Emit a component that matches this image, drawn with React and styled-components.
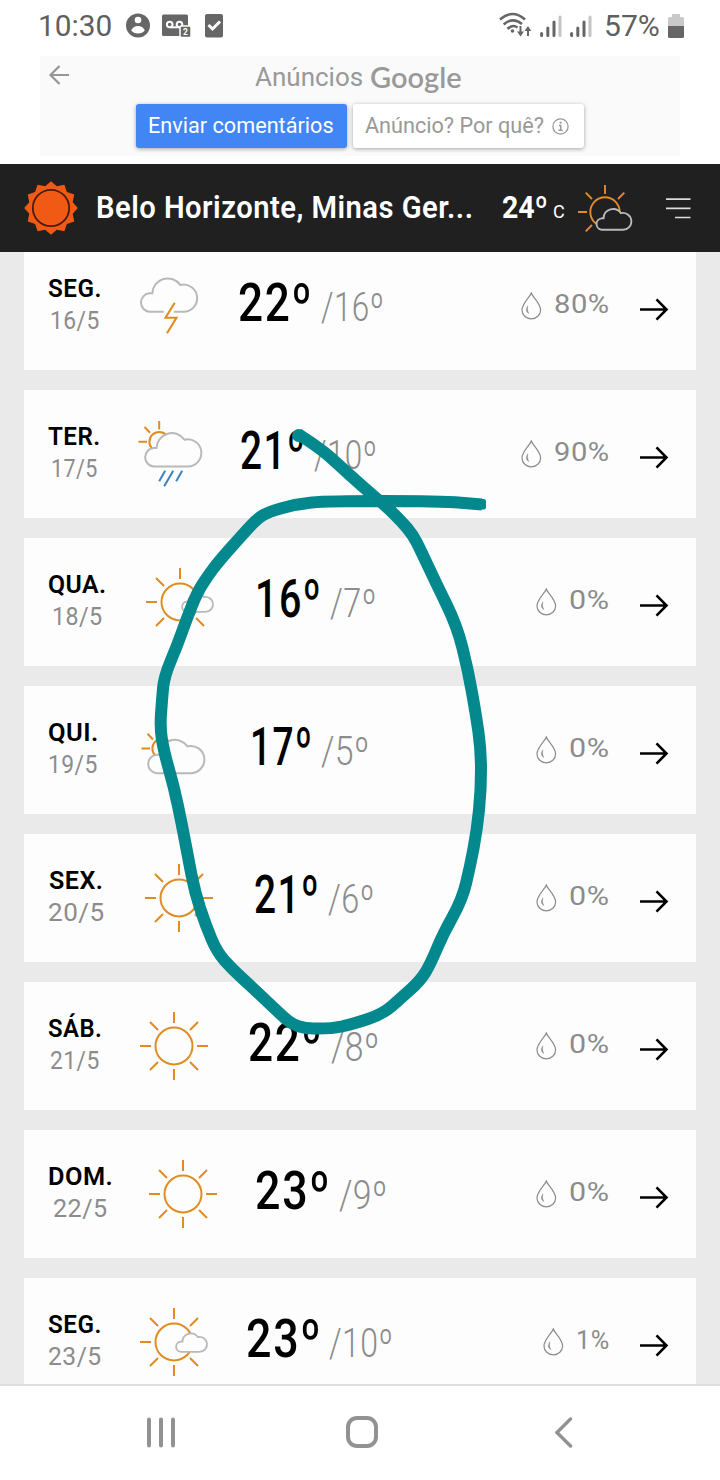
import React, { useLayoutEffect, useRef, useState } from "react";
import styled, { createGlobalStyle } from "styled-components";

const ORANGE = "#e18c22";
const GREY = "#b9b9b9";

const DAYS = [
  { day: "SEG.", dayW: 54, date: "16/5", dateW: 50, box: 53, icon: "storm", iconGap: 38, high: "22º", highW: 75, tempGap: 31, low: "/16º", lowW: 63, lowGap: 8, rain: "80%", rainW: 56 },
  { day: "TER.", dayW: 53, date: "17/5", dateW: 47, box: 53, icon: "rain", iconGap: 37, high: "21º", highW: 66, tempGap: 34, low: "/10º", lowW: 63, lowGap: 8, rain: "90%", rainW: 56 },
  { day: "QUA.", dayW: 59, date: "18/5", dateW: 51, box: 58, icon: "sunCloud", iconGap: 40, high: "16º", highW: 67, tempGap: 41, low: "/7º", lowW: 47, lowGap: 8, rain: "0%", rainW: 41 },
  { day: "QUI.", dayW: 51, date: "19/5", dateW: 50, box: 50, icon: "cloudy", iconGap: 43, high: "17º", highW: 63, tempGap: 41, low: "/5º", lowW: 49, lowGap: 8, rain: "0%", rainW: 41 },
  { day: "SEX.", dayW: 54, date: "20/5", dateW: 57, box: 56, icon: "sun", iconGap: 41, high: "21º", highW: 66, tempGap: 41, low: "/6º", lowW: 47, lowGap: 8, rain: "0%", rainW: 41 },
  { day: "SÁB.", dayW: 54, date: "21/5", dateW: 50, box: 53, icon: "sun", iconGap: 39, high: "22º", highW: 75, tempGap: 40, low: "/8º", lowW: 49, lowGap: 8, rain: "0%", rainW: 41 },
  { day: "DOM.", dayW: 65, date: "22/5", dateW: 55, box: 64, icon: "sun", iconGap: 37, high: "23º", highW: 76, tempGap: 38, low: "/9º", lowW: 49, lowGap: 8, rain: "0%", rainW: 41 },
  { day: "SEG.", dayW: 54, date: "23/5", dateW: 54, box: 53, icon: "sunCloud", iconGap: 39, high: "23º", highW: 76, tempGap: 38, low: "/10º", lowW: 64, lowGap: 7, rain: "1%", rainW: 34 },
];

// narrows or widens a label so that it takes exactly the given width
function Fit({ width, children }) {
  const ref = useRef(null);
  const [scale, setScale] = useState(1);
  useLayoutEffect(() => {
    setScale(width / ref.current.offsetWidth);
  }, [width, children]);
  return (
    <FitBox $width={width}>
      <FitText ref={ref} style={{ transform: `scaleX(${scale})` }}>
        {children}
      </FitText>
    </FitBox>
  );
}

const CLOUD = "H10 A9.3 9.3 0 0 1 10 15 H13 A15.4 15.4 0 0 1 41 6.7 A13.6 13.6 0 1 1 44 33.5";

function Cloud({ fill = "#fdfdfd", stroke = GREY, width = 2, ...rest }) {
  return (
    <path d={`M44 33.5 ${CLOUD} Z`} fill={fill} stroke={stroke} strokeWidth={width} {...rest} />
  );
}

function Sun({ hideRight }) {
  return (
    <g stroke={ORANGE} strokeWidth="2" fill="none">
      <circle cx="34" cy="34" r="18.5" />
      <path d="M34 0V11M34 57V68M0 34H11M10 10L18 18M58 10L50 18M10 58L18 50M58 58L50 50" />
      {!hideRight && <path d="M57 34H68" />}
    </g>
  );
}

function HalfSun({ y }) {
  return (
    <g transform={`translate(0 ${y})`}>
      <g stroke={ORANGE} strokeWidth="2" fill="none">
        <circle cx="21.2" cy="21.7" r="9.8" />
        <path d="M21.2 1V9.5M.5 21.7H9M6.5 7L12 12.8" />
      </g>
      <Cloud transform="translate(5.5 13)" />
    </g>
  );
}

function WeatherIcon({ type }) {
  return (
    <IconSvg viewBox="0 0 68 68">
      {type === "sun" && <Sun />}
      {type === "sunCloud" && (
        <>
          <Sun hideRight />
          <Cloud transform="translate(35.2 25.4) scale(.55)" width={3.4} />
        </>
      )}
      {type === "cloudy" && <HalfSun y={10.7} />}
      {type === "rain" && (
        <>
          <HalfSun y={0} />
          <path d="M27.2 50.7L21.2 61.3M35.2 50.7L26.2 66.3M44.2 50.7L38.2 61.3" stroke="#3983bd" strokeWidth="2" />
        </>
      )}
      {type === "storm" && (
        <>
          <path d={`M24.5 33.5 ${CLOUD} H34.5`} fill="none" stroke={GREY} strokeWidth="2" transform="translate(.3 6.3)" />
          <path d="M35.7 30.7L26.5 45.8H37.5L28 61.3" fill="none" stroke={ORANGE} strokeWidth="2.1" />
        </>
      )}
    </IconSvg>
  );
}

function Forecast({ item, first }) {
  return (
    <Row $first={first}>
      <DayBox $width={item.box}>
        <DayName>
          <Fit width={item.dayW}>{item.day}</Fit>
        </DayName>
        <DayDate>
          <Fit width={item.dateW}>{item.date}</Fit>
        </DayDate>
      </DayBox>
      <IconBox $gap={item.iconGap}>
        <WeatherIcon type={item.icon} />
      </IconBox>
      <Temps $gap={item.tempGap}>
        <High>
          <Fit width={item.highW}>{item.high}</Fit>
        </High>
        <Low $gap={item.lowGap}>
          <Fit width={item.lowW}>{item.low}</Fit>
        </Low>
      </Temps>
      <Rain>
        <svg width="21" height="28" viewBox="0 0 21 28" fill="none" stroke="#8c8c8c" strokeWidth="1.2">
          <path d="M10.3 1C9 5 1 11.5 1 18a9.3 8.8 0 0 0 18.6 0C19.6 11.5 11.6 5 10.3 1Z" />
          <path d="M6.8 13.8C4 18.5 6 20.5 7.8 21.5C6.5 19 6.2 17 6.8 13.8Z" fill="#8c8c8c" strokeWidth=".5" />
        </svg>
        <Fit width={item.rainW}>{item.rain}</Fit>
      </Rain>
      <Arrow width="29" height="23" viewBox="0 0 29 23">
        <path d="M0 11.5H26.5M16.5 1.3L26.5 11.5L16.5 21.7" fill="none" stroke="#000" strokeWidth="2.6" />
      </Arrow>
    </Row>
  );
}

function Signal() {
  return (
    <svg width="22" height="24" viewBox="0 0 22 24" strokeWidth="3" strokeLinecap="round">
      <path d="M1.6 19.5V21.5M7.8 14V21.5M14 8V21.5" stroke="#666" />
      <path d="M20 3V21.5" stroke="#c4c4c4" />
    </svg>
  );
}

function StatusBar() {
  return (
    <Status>
      <Clock>
        <Fit width={74}>10:30</Fit>
      </Clock>
      <StatusIcons>
        <svg width="98" height="26" viewBox="0 0 98 26">
          <circle cx="12" cy="12.5" r="12" fill="#666" />
          <circle cx="12" cy="7" r="3.3" fill="#fff" />
          <path d="M5.2 17.3Q7.5 13 12 13T18.8 17.3Q16.5 20.5 12 20.5T5.2 17.3Z" fill="#fff" />
          <rect x="36" y="1.5" width="26" height="21.5" rx="1.5" fill="#666" />
          <path d="M43.5 14.3H54" stroke="#fff" strokeWidth="2" />
          <circle cx="43.7" cy="11.5" r="2.8" fill="none" stroke="#fff" strokeWidth="2" />
          <circle cx="53.5" cy="11.5" r="2.8" fill="none" stroke="#fff" strokeWidth="2" />
          <rect x="54" y="13" width="11" height="11.5" rx="1.5" fill="#666" stroke="#fff" strokeWidth="1.5" />
          <text x="57" y="22" fontSize="8.5" fontWeight="700" fill="#fff">2</text>
          <rect x="79" y="1" width="18" height="23.5" rx="2" fill="#666" />
          <path d="M82.5 12L86.5 16L94 8.5" fill="none" stroke="#fff" strokeWidth="3" />
        </svg>
      </StatusIcons>
      <StatusRight>
        <Wifi width="33" height="26" viewBox="0 0 33 26" fill="none" stroke="#666">
          <path d="M1 7.5Q13.5 -3.5 26 7.5" strokeWidth="2.5" />
          <path d="M4.7 12.5Q13.5 4.5 23 12" strokeWidth="2.5" />
          <path d="M8.5 17Q13.5 12 18.5 15.5" strokeWidth="2.5" />
          <circle cx="13.5" cy="19" r="1.8" fill="#666" stroke="none" />
          <path d="M21.5 14V22M29 24V17" strokeWidth="2" />
          <path d="M18 19.5H25L21.5 24.5ZM25.5 19H32.3L29 14Z" fill="#666" stroke="none" />
        </Wifi>
        <Signal />
        <Signal />
        <Percent>
          <Fit width={56}>57%</Fit>
        </Percent>
        <svg width="16" height="24" viewBox="0 0 16 24">
          <path d="M4 0H12V3H14.5Q16 3 16 4.5V12H0V4.5Q0 3 1.5 3H4Z" fill="#c9c9c9" />
          <path d="M0 12H16V22.5Q16 24 14.5 24H1.5Q0 24 0 22.5Z" fill="#666" />
        </svg>
      </StatusRight>
    </Status>
  );
}

function AdPanel() {
  return (
    <Ad>
      <AdTop>
        <BackArrow width="22" height="20" viewBox="0 0 22 20">
          <path d="M21 10H2.5M11.5 1L2.5 10L11.5 19" fill="none" stroke="#969696" strokeWidth="2.2" />
        </BackArrow>
        <AdTitle>
          <Fit width={108}>Anúncios</Fit>
        </AdTitle>
        <Brand>
          <Fit width={92}>Google</Fit>
        </Brand>
      </AdTop>
      <AdButtons>
        <AdButton $primary>
          <Fit width={186}>Enviar comentários</Fit>
        </AdButton>
        <AdButton>
          <Fit width={179}>Anúncio? Por quê?</Fit>
          <svg width="17" height="17" viewBox="0 0 17 17" fill="none" stroke="#999">
            <circle cx="8.5" cy="8.5" r="7.6" strokeWidth="1.3" />
            <path d="M7 7.5H8.7V12M6.5 12.3H10.7" strokeWidth="1.5" />
            <path d="M7.6 4.7H9.6" strokeWidth="1.9" />
          </svg>
        </AdButton>
      </AdButtons>
    </Ad>
  );
}

const burst = Array.from({ length: 24 }, (_, i) => {
  const r = i % 2 ? 22.5 : 26.8;
  const a = (i * Math.PI) / 12;
  return `${27 + r * Math.sin(a)},${27 - r * Math.cos(a)}`;
}).join(" ");

function Header() {
  return (
    <TopBar>
      <svg width="54" height="54" viewBox="0 0 54 54">
        <polygon points={burst} fill="#f05a14" />
        <circle cx="27" cy="27" r="18.2" fill="none" stroke="#4a1c0c" strokeWidth="1.8" />
      </svg>
      <City>
        <Fit width={377}>Belo Horizonte, Minas Ger...</Fit>
      </City>
      <Current>
        <Fit width={46}>24º</Fit>
        <Unit>
          <Fit width={12}>C</Fit>
        </Unit>
      </Current>
      <NowIcon width="55" height="48" viewBox="0 0 55 48">
        <g stroke="#e58a2c" strokeWidth="1.9" fill="none">
          <circle cx="27" cy="27" r="14.7" />
          <path d="M27 0V9M0 27H9M7.7 7.7L14 14M46.3 7.7L40 14M7.7 46.3L14 40" />
        </g>
        <Cloud transform="translate(17.5 24) scale(.62)" fill="#202020" stroke="#b9b9be" width={3} />
      </NowIcon>
      <svg width="25" height="21" viewBox="0 0 25 21" stroke="#dcdcdc" strokeWidth="1.7">
        <path d="M0 1.2H24.5M0 10.3H24.5M9 19.5H24.5" />
      </svg>
    </TopBar>
  );
}

function NavBar() {
  return (
    <Nav>
      <NavItem>
        <svg width="28" height="31" viewBox="0 0 28 31" stroke="#929292" strokeWidth="4" strokeLinecap="round">
          <path d="M2 2.5V28.5M14 2.5V28.5M26 2.5V28.5" />
        </svg>
      </NavItem>
      <NavItem>
        <HomeShape />
      </NavItem>
      <NavItem>
        <svg width="18" height="31" viewBox="0 0 18 31" fill="none" stroke="#929292" strokeWidth="3.4" strokeLinecap="round">
          <path d="M15.5 2L2 15.5L15.5 29" />
        </svg>
      </NavItem>
    </Nav>
  );
}

// hand drawn loop over the coldest days
const MARK = [
  [298, 434], [320, 448], [340, 466], [363, 487], [387, 507], [402, 522], [413, 535],
  [421, 551], [437, 585], [457, 626], [468, 670], [476, 715], [481, 750], [481, 790],
  [477, 830], [470, 867], [462, 900], [443, 934], [430, 965], [420, 981], [401, 998],
  [383, 1014], [353, 1024], [330, 1029], [296, 1028], [277, 1011], [253, 988], [232, 969],
  [217, 952], [206, 926], [195, 893], [188, 857], [182, 825], [174, 787], [164, 752],
  [160, 728], [162, 700], [164, 677], [177, 646], [187, 618], [197, 593], [207, 577],
  [219, 561], [244, 533], [257, 519], [268, 512], [297, 504], [327, 501], [440, 501],
  [482, 504.5],
];

function smooth(points) {
  const [start, ...rest] = points;
  const last = rest[rest.length - 1];
  const curves = rest.slice(0, -1).map(([x, y], i) => {
    const [nx, ny] = rest[i + 1];
    return `Q${x} ${y} ${(x + nx) / 2} ${(y + ny) / 2}`;
  });
  return `M${start.join(" ")} ${curves.join(" ")} L${last.join(" ")}`;
}

export default function App() {
  return (
    <>
      <GlobalStyle />
      <Screen>
        <StatusBar />
        <AdPanel />
        <Header />
        <List>
          {DAYS.map((item, i) => (
            <Forecast key={item.date} item={item} first={i === 0} />
          ))}
        </List>
        <NavBar />
        <Doodle viewBox="0 0 720 1480">
          <path d={smooth(MARK)} fill="none" stroke="#02888d" strokeWidth="12" strokeLinejoin="round" />
          <circle cx="298.5" cy="435.5" r="6.5" fill="#02888d" />
          <rect x="478" y="499" width="8" height="10.5" rx="2.5" fill="#02888d" />
        </Doodle>
      </Screen>
    </>
  );
}

const GlobalStyle = createGlobalStyle`
  * { box-sizing: border-box; }
  body {
    margin: 0;
    background: #fff;
    font-family: Roboto, "Noto Sans", sans-serif;
  }
  svg { display: block; flex-shrink: 0; }
`;
const Screen = styled.div`
  position: relative;
  display: flex;
  flex-direction: column;
  width: 720px;
  height: 1480px;
  overflow: hidden;
`;
const FitBox = styled.span`
  display: inline-block;
  width: ${(p) => p.$width}px;
  white-space: nowrap;
`;
const FitText = styled.span`
  display: inline-block;
  transform-origin: 0 50%;
`;
const Status = styled.div`
  display: flex;
  align-items: center;
  height: 56px;
  padding: 0 36px 5px 38px;
  color: #5f5f5f;
  font-size: 29px;
  font-weight: 370;
  line-height: 52px;
`;
const Clock = styled.div`
  height: 51px;
`;
const Percent = styled.div`
  height: 51px;
  margin: 0 0 0 4px;
`;
const StatusIcons = styled.div`
  margin-left: 14px;
`;
const StatusRight = styled.div`
  display: flex;
  align-items: center;
  gap: 8px;
  margin-left: auto;
`;
const Wifi = styled.svg`
  margin-top: -2px;
`;
const Ad = styled.div`
  width: 640px;
  height: 100px;
  margin: 0 40px 8px;
  background: #fafafa;
`;
const AdTop = styled.div`
  display: flex;
  height: 48px;
  padding-left: 8px;
`;
const BackArrow = styled.svg`
  margin-top: 9px;
`;
const AdTitle = styled.div`
  margin-left: 185px;
  color: #999;
  font-size: 26px;
  line-height: 42px;
`;
const Brand = styled.div`
  margin-left: 7px;
  color: #999;
  font: 600 29px/41px Lato, sans-serif;
`;
const AdButtons = styled.div`
  display: flex;
  gap: 6px;
  padding-left: 96px;
`;
const AdButton = styled.div`
  display: flex;
  align-items: center;
  justify-content: space-between;
  width: ${(p) => (p.$primary ? 211 : 231)}px;
  height: 44px;
  padding: 0 ${(p) => (p.$primary ? 12 : 15)}px 0 12px;
  border-radius: 3px;
  background: ${(p) => (p.$primary ? "#4285f4" : "#fff")};
  color: ${(p) => (p.$primary ? "#fff" : "#999")};
  font-size: 22px;
  line-height: 42px;
  box-shadow: 0 1px 4px rgba(0, 0, 0, 0.35);
`;
const TopBar = styled.header`
  display: flex;
  align-items: center;
  height: 88px;
  padding: 0 29px 0 24px;
  background: #202020;
  color: #fff;
`;
const City = styled.div`
  height: 88px;
  margin-left: 18px;
  font-size: 30.5px;
  font-weight: 620;
  letter-spacing: 0.5px;
  line-height: 88px;
`;
const Current = styled.div`
  display: flex;
  align-items: baseline;
  height: 88px;
  margin-left: 29px;
  font-size: 31px;
  font-weight: 700;
  line-height: 88px;
`;
const Unit = styled.div`
  margin-left: 5px;
  font-size: 18px;
  font-weight: 400;
`;
const NowIcon = styled.svg`
  margin: 2px 33px 0 auto;
`;
const List = styled.main`
  display: flex;
  flex-direction: column;
  gap: 20px;
  height: 1132px;
  padding: 0 24px;
  overflow: hidden;
  background: #eaeaea;
`;
const Row = styled.section`
  display: flex;
  flex-shrink: 0;
  height: 128px;
  margin-top: ${(p) => (p.$first ? "-10px" : 0)};
  padding: 30px 27px 0 24px;
  background: #fdfdfd;
`;
const DayBox = styled.div`
  display: flex;
  flex-direction: column;
  align-items: center;
  width: ${(p) => p.$width}px;
  font-size: 26.5px;
  letter-spacing: 0.5px;
`;
const DayName = styled.div`
  color: #000;
  font-weight: 600;
  line-height: 31px;
`;
const DayDate = styled.div`
  color: #8c8c8c;
  line-height: 34px;
`;
const IconBox = styled.div`
  margin-left: ${(p) => p.$gap}px;
`;
const IconSvg = styled.svg`
  width: 68px;
  height: 68px;
  overflow: visible;
`;
const Temps = styled.div`
  display: flex;
  align-items: baseline;
  height: 62px;
  margin-left: ${(p) => p.$gap}px;
  line-height: 62px;
`;
const High = styled.div`
  color: #000;
  font-size: 53px;
  font-weight: 480;
  letter-spacing: 2px;
`;
const Low = styled.div`
  margin-left: ${(p) => p.$gap}px;
  color: #8c8c8c;
  font-size: 40px;
  font-weight: 350;
  letter-spacing: 0.5px;
`;
const Rain = styled.div`
  display: flex;
  align-items: center;
  gap: 12px;
  height: 64px;
  margin: 0 1px 0 auto;
  color: #8c8c8c;
  font-size: 26px;
  letter-spacing: 0.5px;
  line-height: 64px;

  svg {
    margin-top: 3px;
  }
`;
const Arrow = styled.svg`
  margin: 26px 0 0 29px;
`;
const Nav = styled.nav`
  display: flex;
  align-items: center;
  justify-content: space-between;
  height: 96px;
  padding: 0 147px 2px;
  border-top: 2px solid #dedede;
  background: #fff;
`;
const NavItem = styled.div`
  display: flex;
  justify-content: center;
`;
const HomeShape = styled.div`
  width: 32px;
  height: 32px;
  margin-left: -6px;
  border: 4px solid #929292;
  border-radius: 11px;
`;
const Doodle = styled.svg`
  position: absolute;
  top: 0;
  left: 0;
  width: 720px;
  height: 1480px;
  pointer-events: none;
`;
